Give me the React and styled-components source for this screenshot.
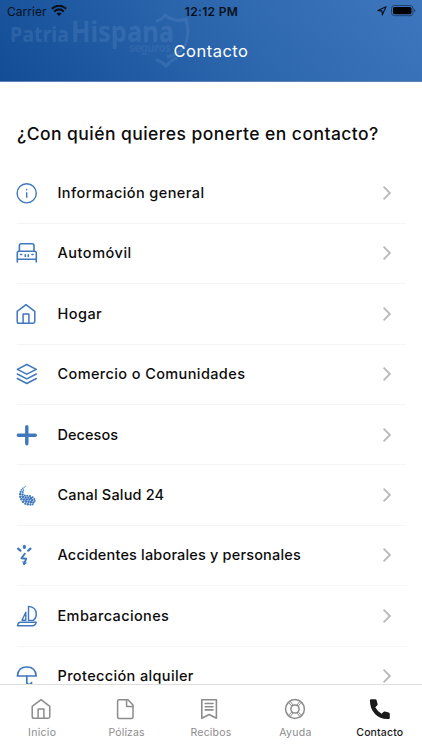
import React from 'react';
import styled, { createGlobalStyle } from 'styled-components';

const GlobalStyle = createGlobalStyle`
  * {
    box-sizing: border-box;
  }

  body {
    margin: 0;
    background: #fff;
    font-family: Inter, 'Noto Sans', sans-serif;
  }
`;

const Screen = styled.div`
  display: flex;
  flex-direction: column;
  width: 422px;
  height: 750px;
  overflow: hidden;
  background: #fff;
`;

const Header = styled.header`
  position: relative;
  flex: none;
  height: 82px;
  overflow: hidden;
  background: linear-gradient(50deg, #124d96 0%, #2a64ab 48%, #3e77bd 100%);
  border-bottom: 1px solid #5c84ba;
`;

const Watermark = styled.div`
  position: absolute;
  top: 14px;
  left: 9px;
  width: 185px;
  height: 56px;
`;

const StatusBar = styled.div`
  position: relative;
  display: grid;
  grid-template-columns: 1fr auto 1fr;
  align-items: center;
  height: 22px;
  padding: 0 6px 0 7px;
  color: #07101c;
  font-size: 12px;
`;

const StatusGroup = styled.div`
  display: flex;
  align-items: center;
  justify-content: ${({ $end }) => ($end ? 'flex-end' : 'flex-start')};
  gap: 4px;
`;

const Carrier = styled.span`
  letter-spacing: 0.05px;
`;

const Clock = styled.span`
  font-weight: 600;
  letter-spacing: 0.35px;
`;

const Title = styled.h1`
  position: relative;
  margin: 0;
  padding-top: 19px;
  color: #fff;
  font-size: 16.5px;
  font-weight: 400;
  line-height: 20px;
  letter-spacing: 0.5px;
  text-align: center;
`;

const Content = styled.main`
  flex: 1;
  min-height: 0;
  overflow: hidden;
  padding: 41px 17px 0 17px;
`;

const Question = styled.h2`
  margin: 0 0 18.4px;
  color: #0c0c0c;
  font-size: 17.5px;
  font-weight: 450;
  line-height: 22px;
  letter-spacing: 0.45px;
  white-space: nowrap;
`;

const List = styled.ul`
  margin: 0;
  padding: 0;
  list-style: none;
`;

const Row = styled.li`
  display: grid;
  grid-template-columns: 40.5px 1fr 24px;
  align-items: center;
  height: 60.4px;
  margin-right: -1px;
  border-bottom: 1px solid #f5f5f5;
  color: #3f78bd;

  svg {
    display: block;
  }
`;

const RowLabel = styled.span`
  color: #0c0c0c;
  font-size: 14.5px;
  font-weight: 450;
  line-height: 20px;
  letter-spacing: ${({ $tracking }) => $tracking || 0}px;
  white-space: nowrap;
`;

const TabBar = styled.nav`
  flex: none;
  display: grid;
  grid-template-columns: repeat(5, 1fr);
  height: 66px;
  border-top: 1px solid #dedede;
  background: #fff;
`;

const Tab = styled.div`
  display: flex;
  flex-direction: column;
  align-items: center;
  padding-top: 14px;
  color: ${({ $active }) => ($active ? '#1b1b1b' : '#8c8c8c')};
`;

const TabLabel = styled.span`
  margin-top: 6px;
  font-size: 10.5px;
  font-weight: ${({ $active }) => ($active ? 500 : 400)};
  line-height: 16px;
  letter-spacing: ${({ $tracking }) => $tracking || 0}px;
`;

function Icon({ size = 20, width = 1.5, children }) {
  return (
    <svg
      width={size}
      height={size}
      viewBox="0 0 20 20"
      fill="none"
      stroke="currentColor"
      strokeWidth={width}
      strokeLinecap="round"
      strokeLinejoin="round"
      overflow="visible"
    >
      {children}
    </svg>
  );
}

const InfoIcon = () => (
  <Icon width={1.4}>
    <circle cx="9.7" cy="10.3" r="9.6" />
    <path d="M9.7 9.8v4.5" />
    <path d="M9.7 6.4v.3" />
  </Icon>
);

const CarIcon = () => (
  <Icon width={1.6}>
    <path d="M2.4 8.2V2.6Q2.4.8 4.2.8h11Q17 .8 17 2.6v5.6" />
    <path d="M.3 19V10q0-1.7 1.7-1.7h15.6q1.7 0 1.7 1.7v9M.3 16.2h19" />
    <path d="M3.5 11.5h1.2M14.9 11.5h1.2M8.3 11.8v1.6M11.3 11.8v1.6" />
  </Icon>
);

const HouseIcon = ({ width = 1.5 }) => (
  <Icon width={width}>
    <path d="M.2 7.4 9 .7l8.8 6.7v10.2q0 1.7-1.7 1.7H1.9q-1.7 0-1.7-1.7Z" />
    <path d="M6.1 19.2v-9.1h5.8v9.1" />
  </Icon>
);

const LayersIcon = () => (
  <Icon width={1.5}>
    <path d="m9.8.5 9.5 4.8-9.5 4.9L.3 5.3Z" />
    <path d="m.3 10 9.5 4.9 9.5-4.9" />
    <path d="m.3 14.5 9.5 5 9.5-5" />
  </Icon>
);

const PlusIcon = () => (
  <Icon width={3.4}>
    <path d="M9.8 1.8v17M1.3 10.3h17" />
  </Icon>
);

// [x, y, radius] for each bead of the paisley
const beads = [
  [8.4, 0.8, 0.5], [6.9, 1.7, 0.6], [5.5, 2.8, 0.8], [4.3, 4.3, 0.9],
  [6.2, 4.6, 0.8], [3.3, 6.3, 1.1], [5.5, 6.6, 1], [2.8, 8.6, 1.2],
  [5.2, 9, 1.2], [3, 11.2, 1.25], [5.6, 11.5, 1.25], [7.5, 9.9, 1],
  [4.1, 13.8, 1.25], [6.8, 13.9, 1.25], [8.3, 12, 1.2], [10, 10.3, 1.05],
  [5.8, 16.3, 1.25], [8.6, 16.1, 1.3], [9.5, 13.9, 1.25], [11, 12.1, 1.2],
  [12.7, 10.6, 1.1], [8, 18.3, 1.15], [11.2, 16.2, 1.3], [12.2, 14.1, 1.25],
  [13.7, 12.5, 1.2], [15.4, 11.8, 1], [10.6, 18.8, 1.2], [13.6, 16.5, 1.3],
  [14.9, 14.5, 1.25], [13.2, 19, 1.15], [16, 17, 1.2], [17, 13.6, 1],
  [17.4, 15.4, 1], [15.4, 18.9, 0.9],
];

const PaisleyIcon = () => (
  <Icon>
    <g fill="currentColor" stroke="none">
      {beads.map(([x, y, r]) => (
        <circle key={`${x}-${y}`} cx={x + 0.3} cy={y + 0.5} r={r} />
      ))}
    </g>
  </Icon>
);

const AccidentIcon = () => (
  <Icon width={2.2}>
    <path d="m1.1 3.7 2.3 2M13.5 3.7l-2.3 2" />
    <path d="M7.4 1.2v1.2" strokeWidth="3" />
    <path d="m7.8 8.8-3.4 4.5 4.8.4-2 5.2" strokeWidth="1.9" />
    <path d="m6 16.6.9 2.7 2.1-1.4" strokeWidth="1.2" />
  </Icon>
);

const SailboatIcon = () => (
  <Icon width={1.4}>
    <path d="M11.5.4v14h5q2.8-2.4 2.8-6.4 0-6.8-7.8-7.6Z" />
    <path d="M8.8 6.2 5 14.2h3.8Z" />
    <path d="M3.4 16.2h15.9q-.9 3.6-3.2 3.6H.5q.3-3.5 2.9-3.6Z" />
  </Icon>
);

const UmbrellaIcon = () => (
  <Icon width={1.7}>
    <path d="M.4 10Q1 1 9.8 1t9.4 9Z" />
    <path d="M9.8 10v6.4q0 1.9 2.3 1.9t2.5-1.7" />
  </Icon>
);

const FileIcon = () => (
  <Icon width={1.5}>
    <path d="M2.1.7H11l5 5.4v11.8q0 1.5-1.5 1.5H2.1q-1.5 0-1.5-1.5V2.2Q.6.7 2.1.7Z" />
    <path d="M9.6.9v6.5h6.2" />
  </Icon>
);

const ReceiptIcon = () => (
  <Icon width={1.6}>
    <path d="M.8.7h14.6v18.6l-7.3-3.8-7.3 3.8Z" />
    <path d="M4.2 4.5h7.8M4.2 7.7h7.8M4.2 10.9h7.8" />
  </Icon>
);

const HelpIcon = () => (
  <Icon width={1.5}>
    <circle cx="10" cy="10" r="9.4" />
    <circle cx="10" cy="10" r="4.1" />
    <path d="m3.2 3.4 3.5 3.5M5 2.1l3 4M16.8 3.4l-3.5 3.5M15 2.1l-3 4M3.2 16.6l3.5-3.5M5 17.9l3-4M16.8 16.6l-3.5-3.5M15 17.9l-3-4" strokeWidth="1" />
  </Icon>
);

const PhoneIcon = () => (
  <Icon>
    <path
      d="M1 .2h4.3q1 0 1.3 1l1 3.8q.2.9-.5 1.5L5.3 8.2q2.1 4.1 6.3 6.5l1.8-1.8q.6-.7 1.5-.4l3.8 1q1.1.3 1.1 1.4v3.8q0 1.2-1.2 1.2Q10 20.3 5 14.9-.1 9.5-.1 1.4-.1.2 1 .2Z"
      fill="currentColor"
      stroke="none"
    />
  </Icon>
);

const Chevron = () => (
  <svg width="14" height="16" viewBox="0 0 14 16" fill="none" stroke="#b9b9b9" strokeWidth="1.8">
    <path d="m1.6 1.7 6.3 6.3-6.3 6.3" />
  </svg>
);

const WifiIcon = () => (
  <svg width="16" height="12" viewBox="0 0 16 12" fill="none" stroke="currentColor" strokeWidth="2">
    <path d="M.8 3.8q7.2-6.2 14.4 0M3.2 6.4q4.8-4.1 9.6 0" />
    <path d="M8 11.1 5.5 8.5Q8 6.5 10.5 8.5Z" fill="currentColor" stroke="none" />
  </svg>
);

const LocationIcon = () => (
  <svg width="10" height="10" viewBox="0 0 10 10" fill="none" stroke="currentColor" strokeWidth="1.1" strokeLinejoin="round">
    <path d="m9 .7-8 3.9 4 .3.3 4Z" />
  </svg>
);

const BatteryIcon = () => (
  <svg width="25" height="12" viewBox="0 0 25 12">
    <rect x=".5" y=".5" width="21.5" height="10.2" rx="3" fill="none" stroke="#1e416f" />
    <rect x="2" y="2" width="18.5" height="7.2" rx="1.6" fill="#000" />
    <path d="M23.2 3.7q1.2.4 1.2 1.8t-1.2 1.8Z" fill="#1e416f" />
  </svg>
);

const items = [
  { label: 'Información general', icon: InfoIcon, tracking: 0.42 },
  { label: 'Automóvil', icon: CarIcon, tracking: 0.52 },
  { label: 'Hogar', icon: HouseIcon, tracking: 0.45 },
  { label: 'Comercio o Comunidades', icon: LayersIcon, tracking: 0.39 },
  { label: 'Decesos', icon: PlusIcon, tracking: 0.05 },
  { label: 'Canal Salud 24', icon: PaisleyIcon, tracking: 0.17 },
  { label: 'Accidentes laborales y personales', icon: AccidentIcon, tracking: 0.17 },
  { label: 'Embarcaciones', icon: SailboatIcon, tracking: 0.38 },
  { label: 'Protección alquiler', icon: UmbrellaIcon, tracking: 0.36 },
];

const tabs = [
  { label: 'Inicio', icon: HouseIcon, tracking: 0.3 },
  { label: 'Pólizas', icon: FileIcon, tracking: 0.1 },
  { label: 'Recibos', icon: ReceiptIcon, tracking: 0.2 },
  { label: 'Ayuda', icon: HelpIcon, tracking: 0.3 },
  { label: 'Contacto', icon: PhoneIcon, tracking: 0.15, active: true },
];

function BrandWatermark() {
  return (
    <Watermark>
      <svg width="185" height="56" viewBox="0 0 185 56" overflow="visible" fill="#6f9bd0" fontFamily="'Noto Sans', sans-serif" fontWeight="700">
        <g opacity="0.22">
          <text x="1" y="28" fontSize="21.5" textLength="59" lengthAdjust="spacingAndGlyphs">Patria</text>
          <text x="62" y="28" fontSize="28" textLength="103" lengthAdjust="spacingAndGlyphs">Hispana</text>
          <text x="120" y="38" fontSize="11.5" textLength="42" opacity="0.7">seguros</text>
          <path
            d="M147 7q6-1 9-6 10 8 21 4 3 12 1 20-2 14-20 18M147 46q6 1 10 6 5-6 11-8"
            fill="none"
            stroke="#6f9bd0"
            strokeWidth="3"
          />
        </g>
      </svg>
    </Watermark>
  );
}

function App() {
  return (
    <>
      <GlobalStyle />
      <Screen>
        <Header>
          <BrandWatermark />
          <StatusBar>
            <StatusGroup>
              <Carrier>Carrier</Carrier>
              <WifiIcon />
            </StatusGroup>
            <Clock>12:12 PM</Clock>
            <StatusGroup $end>
              <LocationIcon />
              <BatteryIcon />
            </StatusGroup>
          </StatusBar>
          <Title>Contacto</Title>
        </Header>
        <Content>
          <Question>¿Con quién quieres ponerte en contacto?</Question>
          <List>
            {items.map(({ label, icon: ItemIcon, tracking }) => (
              <Row key={label}>
                <ItemIcon />
                <RowLabel $tracking={tracking}>{label}</RowLabel>
                <Chevron />
              </Row>
            ))}
          </List>
        </Content>
        <TabBar>
          {tabs.map(({ label, icon: TabIcon, tracking, active }) => (
            <Tab key={label} $active={active}>
              <TabIcon />
              <TabLabel $tracking={tracking} $active={active}>{label}</TabLabel>
            </Tab>
          ))}
        </TabBar>
      </Screen>
    </>
  );
}

export default App;
